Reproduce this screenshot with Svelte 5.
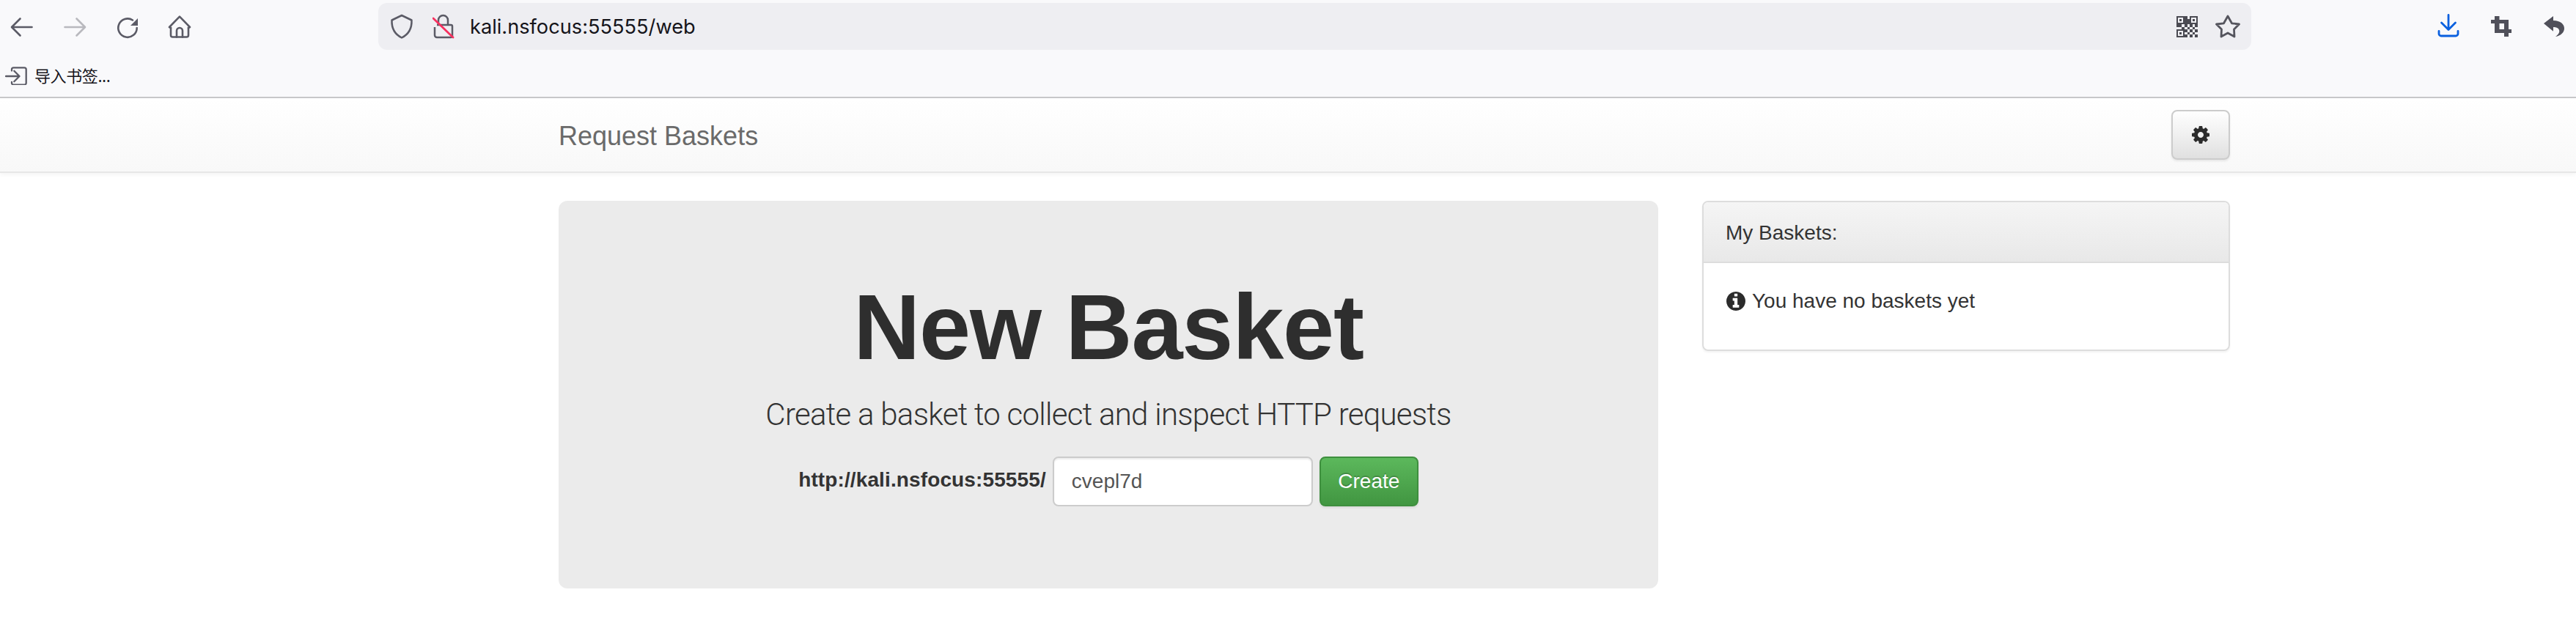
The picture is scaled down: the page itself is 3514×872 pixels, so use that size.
<script>
  const qrCells = [
    [3,1],[4,1],[3,0],[3,2],[4,2],[0,3],[1,3],[3,3],[5,3],[7,3],[2,4],[4,4],[6,4],
    [3,5],[5,5],[7,5],[4,6],[6,6],[3,7],[5,7],[7,7]
  ];
</script>

<div class="chrome">
  <div class="toolbar">
    <div class="nav-buttons">
      <span class="tool">
        <svg width="36" height="36" viewBox="0 0 36 36" fill="none" stroke="#5b5b66" stroke-width="2.6" stroke-linecap="round" stroke-linejoin="round"><path d="M31.5 19H4.500M15.500 7.500 4 19l11.500 11.500" /></svg>
      </span>
      <span class="tool">
        <svg width="36" height="36" viewBox="0 0 36 36" fill="none" stroke="#b9b9be" stroke-width="2.6" stroke-linecap="round" stroke-linejoin="round"><path d="M4.500 19h27M20.500 7.500 32 19 20.500 30.500" /></svg>
      </span>
      <span class="tool">
        <svg width="36" height="36" viewBox="0 0 36 36" fill="none"><path d="M30.700 20A12.700 12.700 0 1 1 25 9.500" stroke="#5b5b66" stroke-width="2.6" stroke-linecap="round" /><path d="M32 7v10H22z" fill="#5b5b66" /></svg>
      </span>
      <span class="tool">
        <svg width="36" height="36" viewBox="0 0 36 36" fill="none" stroke="#5b5b66" stroke-width="2.6" stroke-linejoin="round" stroke-linecap="round"><path d="M5 20 3 19 17 4.700 31 19 29 20" /><path d="M5 20v10a2.500 2.500 0 0 0 2.500 2.500h19a2.500 2.500 0 0 0 2.500-2.500V20" /><path d="M13 32.500V24a4 4 0 0 1 8 0v8.500" /></svg>
      </span>
    </div>
    <div class="urlbar">
      <svg class="shield" width="32" height="34" viewBox="0 0 32 34" fill="none" stroke="#5b5b66" stroke-width="2.500" stroke-linejoin="round"><path d="M16 2 29.500 8.500C30 20 25 28 16 32.500 7 28 2 20 2.500 8.500z" /></svg>
      <svg class="lock" width="30" height="34" viewBox="0 0 30 34" fill="none"><path d="M8 15V8.500a6.500 6.500 0 0 1 13 0V15M6 15h19a2 2 0 0 1 2 2v13a2 2 0 0 1-2 2H6a3 3 0 0 1-3-3V18" stroke="#5b5b66" stroke-width="2.500" stroke-linejoin="round" /><path d="M1 6 28 32" stroke="#f6305f" stroke-width="2.800" stroke-linecap="round" /></svg>
      <span class="url">kali.nsfocus:55555/web</span>
      <svg class="qr" width="29" height="29" viewBox="0 0 8 8" shape-rendering="crispEdges" fill="#4a4a52">
        <path fill-rule="evenodd" d="M0 0h3v3H0zM.6.6v1.800h1.800V.6zM5 0h3v3H5zM5.600.6v1.800h1.800V.6zM0 5h3v3H0zM.6 5.600v1.800h1.800V5.600z" />
        <rect x="1" y="1" width="1" height="1" /><rect x="6" y="1" width="1" height="1" /><rect x="1" y="6" width="1" height="1" />
        {#each qrCells as c}<rect x={c[0]} y={c[1]} width="1" height="1" />{/each}
      </svg>
      <svg class="star" width="34" height="32" viewBox="0 0 34 32" fill="none" stroke="#55555e" stroke-width="2.800" stroke-linejoin="round"><path d="M17 2 22.500 11.800 32.500 13 25.500 20 26 30 17 25 8 30 8.500 20 1.500 13 11.500 11.800z" /></svg>
    </div>
    <div class="end-buttons">
      <span class="tool">
        <svg width="36" height="36" viewBox="0 0 36 36" fill="none" stroke="#0a60df" stroke-width="2.800" stroke-linecap="round" stroke-linejoin="round"><path d="M18 2.500V22.500M8.500 13 18 22.500 27.500 13M5 24.500v3.500a3 3 0 0 0 3 3h20a3 3 0 0 0 3-3v-3.500" /></svg>
      </span>
      <span class="tool">
        <svg width="36" height="36" viewBox="0 0 36 36" fill="#50505a"><path fill-rule="evenodd" d="M9 4h6.500v5H28v13h4v5h-4v5h-6v-5H9V14H4V9h5zM15.500 14v8H22v-8z" /></svg>
      </span>
      <span class="tool">
        <svg width="36" height="36" viewBox="0 0 36 36" fill="#50505a"><path d="M4 14 17 4V10C27 10 32 15 32 21C32 26 27 31 20 32C24 29 26 26 25 23C24 20 21 19 17 19V24.700z" /></svg>
      </span>
    </div>
  </div>
  <div class="bookmarks">
    <svg width="30" height="28" viewBox="0 0 30 28" fill="none" stroke="#5b5b66" stroke-width="2.300" stroke-linecap="round" stroke-linejoin="round"><path d="M1 16h18M12.300 8.700 19.500 16l-7.200 7.300M9 8.500V6.800a2.500 2.500 0 0 1 2.500-2.500h14.700a2.500 2.500 0 0 1 2.500 2.500v18.400a2.500 2.500 0 0 1-2.500 2.500H11.500A2.500 2.500 0 0 1 9 25.200V24" /></svg>
    <span class="bookmark-label">导入书签...</span>
  </div>
</div>

<nav class="navbar">
  <div class="container nav-inner">
    <span class="brand">Request Baskets</span>
    <button class="gear-btn" aria-label="Settings">
      <svg width="28" height="28" viewBox="0 0 1792 1792" fill="#2b2b2b"><path d="M1152 896q0-106-75-181t-181-75-181 75-75 181 75 181 181 75 181-75 75-181zm512-109v222q0 12-8 23t-20 13l-185 28q-19 54-39 91 35 50 107 138 10 12 10 25t-9 23q-27 37-99 108t-94 71q-12 0-26-9l-138-108q-44 23-91 38-16 136-29 186-7 28-36 28h-222q-14 0-24.500-8.500t-11.500-21.500l-28-184q-49-16-90-37l-141 107q-10 9-25 9-14 0-25-11-126-114-165-168-7-10-7-23 0-12 8-23 15-21 51-66.500t54-70.500q-27-50-41-99l-183-27q-13-2-21-12.500t-8-23.500v-222q0-12 8-23t19-13l186-28q14-46 39-92-40-57-107-138-10-12-10-24 0-10 9-23 26-36 98.500-107.500t94.500-71.500q13 0 26 10l138 107q44-23 91-38 16-136 29-186 7-28 36-28h222q14 0 24.500 8.500t11.500 21.500l28 184q49 16 90 37l142-107q9-9 24-9 13 0 25 10 129 119 165 170 7 8 7 22 0 12-8 23-15 21-51 66.500t-54 70.500q26 50 41 98l183 28q13 2 21 12.500t8 23.500z" /></svg>
    </button>
  </div>
</nav>

<main class="container content">
  <section class="jumbotron">
    <h1>New Basket</h1>
    <p class="lead">Create a basket to collect and inspect HTTP requests</p>
    <form class="basket-form">
      <label for="basket">http://kali.nsfocus:55555/</label>
      <input id="basket" value="cvepl7d" />
      <button type="button" class="create">Create</button>
    </form>
  </section>
  <aside class="panel">
    <div class="panel-heading">My Baskets:</div>
    <div class="panel-body">
      <svg width="26" height="26" viewBox="128 128 1536 1536" fill="#2b2b2b"><path d="M1152 1376v-160q0-14-9-23t-23-9h-96v-512q0-14-9-23t-23-9h-320q-14 0-23 9t-9 23v160q0 14 9 23t23 9h96v320h-96q-14 0-23 9t-9 23v160q0 14 9 23t23 9h448q14 0 23-9t9-23zm-128-896v-160q0-14-9-23t-23-9h-192q-14 0-23 9t-9 23v160q0 14 9 23t23 9h192q14 0 23-9t9-23zm640 416q0 209-103 385.500t-279.500 279.500-385.500 103-385.500-103-279.500-279.500-103-385.500 103-385.500 279.500-279.500 385.500-103 385.500 103 279.500 279.500 103 385.500z" /></svg>
      <span>You have no baskets yet</span>
    </div>
  </aside>
</main>

<style>
  :global(body) {
    margin: 0;
    background: #fff;
    color: #333;
    font-family: "Liberation Sans", Arial, sans-serif;
    font-size: 28px;
    overflow: hidden;
  }
  :global(*) { box-sizing: border-box; }

  .chrome {
    background: #f9f9fb;
    border-bottom: 2px solid #c8c8ca;
    height: 134px;
  }
  .toolbar {
    display: flex;
    align-items: center;
    height: 72px;
  }
  .nav-buttons, .end-buttons {
    display: flex;
    gap: 12px;
  }
  .tool {
    width: 60px;
    height: 36px;
    display: flex;
    align-items: center;
    justify-content: center;
  }
  .urlbar {
    margin-left: 240px;
    width: 2556px;
    height: 64px;
    background: #eeeef2;
    border-radius: 12px;
    display: flex;
    align-items: center;
  }
  .end-buttons { margin-left: 239px; }
  .shield { margin-left: 16px; }
  .lock { margin-left: 26px; }
  .url {
    margin-left: 21px;
    font-family: Inter, "Noto Sans", sans-serif;
    font-size: 27.200px;
    color: #15141a;
    flex: 1;
  }
  .qr { margin-right: 24px; }
  .star { margin-right: 15px; }

  .bookmarks {
    height: 60px;
    display: flex;
    align-items: center;
    padding-left: 7px;
    gap: 10px;
  }
  .bookmark-label {
    font-family: "Noto Sans CJK SC", sans-serif;
    font-size: 22px;
    letter-spacing: -0.400px;
    color: #15141a;
  }

  .container {
    width: 2280px;
    margin-left: 762px;
  }
  .navbar {
    height: 102px;
    background: linear-gradient(to bottom, #fff, #f8f8f8);
    border-bottom: 2px solid #e7e7e7;
    box-shadow: 0 2px 6px rgba(0,0,0,.05);
  }
  .nav-inner {
    display: flex;
    justify-content: space-between;
    align-items: flex-start;
    padding-top: 16px;
  }
  .brand {
    font-size: 36px;
    color: #6a6a6a;
    line-height: 72px;
  }
  .gear-btn {
    width: 80px;
    height: 68px;
    padding: 0;
    border: 2px solid #ccc;
    border-radius: 8px;
    background: linear-gradient(to bottom, #fff, #e0e0e0);
    box-shadow: 0 2px 3px rgba(0,0,0,.08);
    display: flex;
    align-items: center;
    justify-content: center;
  }

  .content {
    display: flex;
    gap: 60px;
    margin-top: 38px;
    align-items: flex-start;
  }
  .jumbotron {
    width: 1500px;
    height: 529px;
    flex: none;
    background: #ebebeb;
    border-radius: 12px;
    padding-top: 104px;
    text-align: center;
  }
  h1 {
    margin: 0;
    font-size: 126px;
    line-height: 138px;
    font-weight: 700;
    color: #2e2e2e;
    letter-spacing: -1.200px;
  }
  .lead {
    margin: 20px 0 0;
    font-family: Roboto, "Liberation Sans", sans-serif;
    font-size: 42px;
    line-height: 60px;
    font-weight: 300;
    letter-spacing: -0.730px;
    color: #333;
  }
  .basket-form {
    margin-top: 27px;
    display: flex;
    justify-content: center;
    align-items: flex-start;
  }
  label {
    font-weight: 700;
    font-size: 28px;
    line-height: 64px;
    margin-right: 9px;
    letter-spacing: .12px;
  }
  input {
    width: 355px;
    height: 68px;
    padding: 0 24px;
    border: 2px solid #ccc;
    border-radius: 8px;
    background: #fff;
    color: #555;
    font: 28px "Liberation Sans", Arial, sans-serif;
    box-shadow: inset 0 2px 2px rgba(0,0,0,.075);
    margin-right: 9px;
  }
  .create {
    width: 135px;
    height: 68px;
    padding: 0;
    border: 2px solid #3e8f3e;
    border-radius: 8px;
    background: linear-gradient(to bottom, #5cb85c, #419641);
    color: #fff;
    font: 28px "Liberation Sans", Arial, sans-serif;
    text-shadow: 0 -2px 0 rgba(0,0,0,.2);
    box-shadow: 0 2px 3px rgba(0,0,0,.08);
  }

  .panel {
    width: 720px;
    height: 205px;
    flex: none;
    border: 2px solid #ddd;
    border-radius: 8px;
    box-shadow: 0 2px 3px rgba(0,0,0,.05);
    overflow: hidden;
  }
  .panel-heading {
    height: 83px;
    padding-left: 30px;
    line-height: 84px;
    background: linear-gradient(to bottom, #f5f5f5, #e8e8e8);
    border-bottom: 2px solid #ddd;
    color: #333;
  }
  .panel-body {
    padding: 36px 0 0 31px;
    display: flex;
    align-items: center;
    gap: 9px;
    line-height: 32px;
  }
</style>
